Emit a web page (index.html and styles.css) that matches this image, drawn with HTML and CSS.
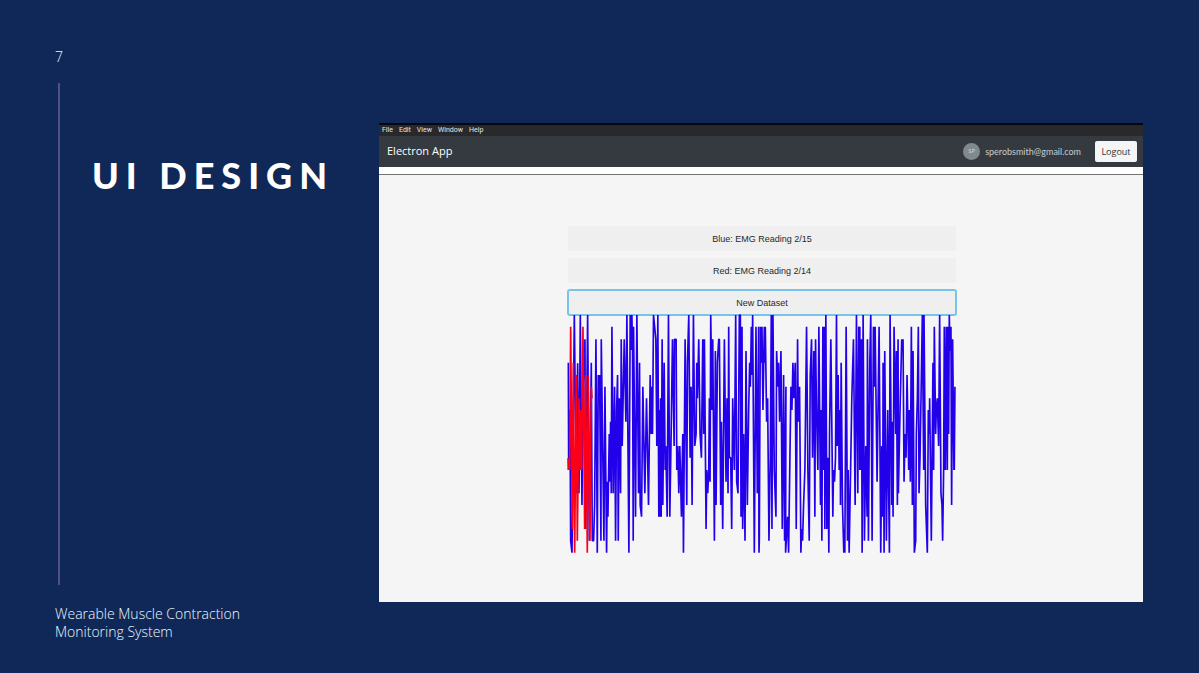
FILE: index.html
```html
<!DOCTYPE html>
<html lang="en">
<head>
<meta charset="utf-8">
<title>UI Design</title>
<link rel="stylesheet" href="styles.css">
</head>
<body>
<main class="slide">
  <aside class="rail">
    <span class="page-number">7</span>
    <div class="rail-body"><h1 class="title">UI DESIGN</h1></div>
    <p class="project">Wearable Muscle Contraction Monitoring System</p>
  </aside>
  <section class="app">
    <nav class="menu">
      <button type="button">File</button>
      <button type="button">Edit</button>
      <button type="button">View</button>
      <button type="button">Window</button>
      <button type="button">Help</button>
    </nav>
    <header class="navbar">
      <h2 class="brand">Electron App</h2>
      <span class="avatar">SP</span>
      <span class="email">sperobsmith@gmail.com</span>
      <button type="button" class="logout">Logout</button>
    </header>
    <div class="content">
      <div class="readings">
        <button type="button" class="dataset">Blue: EMG Reading 2/15</button>
        <button type="button" class="dataset">Red: EMG Reading 2/14</button>
        <button type="button" class="dataset selected">New Dataset</button>
        <svg class="chart" viewBox="25 15 1164 714" preserveAspectRatio="none" role="img" aria-label="EMG readings">
          <g class="blue">
            <polyline points="26,158 27,480 31,300 33,692 37,728 44,15 50,550 54,160 58,550 62,15 67,585 70,230 76,88 78,657 84,15 89,692 95,158 98,692 102,692 105,585 109,88 113,728 116,195 118,265 120,195 124,692 125,88 133,692 136,230 141,728 143,515 145,620 149,372 151,515 153,335 155,550 157,50 161,550 165,230 168,692 171,300 174,195 176,692 179,265 183,550 185,88 188,408 194,88 199,335 202,15 208,728 212,15 215,120 217,15 219,120 221,692 222,50 228,620 232,15 237,550 240,158 242,585 246,620 250,230 256,550 261,265 267,585 272,195 275,372 277,230 279,372 282,15 289,88 292,408 295,15 298,620 301,300"/>
            <polyline transform="translate(300 0)" points="1,300 1,620 3,265 5,620 8,88 10,585 14,158 17,480 19,408 23,620 27,15 31,620 35,372 39,88 44,408 45,88 50,88 52,480 55,408 58,550 61,408 66,620 68,480 70,372 72,728 77,88 82,585 84,158 88,15 92,443 95,230 98,585 102,15 106,408 110,372 112,158 114,265 118,88 122,372 126,443 130,88 133,372 135,88 140,657 142,480 145,550 148,480 150,265 152,515 154,15 158,300 160,88 165,692 168,123 170,585 174,158 178,88 180,88 184,585 186,335 190,657 195,88 200,515 203,265 206,550 208,50 210,443 214,443 217,657 220,265 225,480 229,15 232,515 236,550 240,15 243,15 245,620 248,50 250,657 253,372 257,692 260,123 264,585 268,300 271,158 273,230 276,50 278,195 280,15 285,728 290,50 294,550 298,50 299,728 300,692"/>
            <polyline transform="translate(600 0)" points="0,692 3,50 5,158 8,50 11,300 15,50 17,158 18,50 22,335 25,265 29,692 33,443 36,15 38,657 41,15 45,480 50,620 52,123 56,230 58,158 61,335 65,123 69,657 73,195 76,692 80,230 79,728 85,620 88,728 92,443 95,230 98,300 101,158 104,265 108,158 111,657 115,88 117,335 121,230 125,728 127,657 130,692 133,585 137,480 142,50 146,480 150,692 153,195 157,88 160,443 164,123 167,620 169,88 172,300 176,480 179,50 184,585 186,300 188,692 191,50 194,480 196,50 197,657 200,15 203,657 206,443 209,728 211,372 215,88 221,620 223,480 226,515 229,443 232,15 234,408 237,195 240,480 243,300 244,585 246,158 250,585 254,728 256,657 257,728 261,50 265,692 267,480 270,728 275,443 278,265 283,88 288,585 292,15 296,550 299,50"/>
            <polyline transform="translate(900 0)" points="-1,50 2,480 2,50 4,480 7,88 9,728 12,15 16,692 20,408 24,620 25,88 28,692 32,158 35,15 39,692 43,50 46,230 48,50 54,515 60,50 65,728 68,408 71,620 72,158 75,728 77,123 82,692 86,300 91,728 93,15 98,585 100,335 102,620 105,50 110,372 112,123 115,585 117,88 118,550 123,300 128,88 130,123 132,88 135,515 138,372 141,443 144,195 149,480 151,300 154,515 157,50 160,585 162,123 166,728 170,692 172,372 175,265 178,50 180,550 183,443 186,265 190,15 194,480 195,15 200,585 205,728 208,300 211,372 212,265 217,692 220,372 222,158 224,480 226,50 230,372 232,300 235,265 239,408 242,15 246,550 249,585 251,692 254,480 256,50 259,480 262,50 265,480 267,50 269,372 271,15 273,123 276,50 278,585 281,88 285,480 288,230 286,480"/>
          </g>
          <g class="red">
            <polyline points="25,445 26,480 28,445 30,480 33,50 38,657 41,158 45,728 50,195 53,692 58,265 61,480 63,300 66,480 70,50 75,657 78,195 83,728 86,195 91,692 95,230 97,265"/>
          </g>
        </svg>
      </div>
    </div>
  </section>
</main>
</body>
</html>
```
FILE: styles.css
```css
* { box-sizing: border-box; }
body {
  margin: 0;
  background: #102857;
  color: #fff;
  font-family: "Open Sans", "Noto Sans", sans-serif;
}
button { font: inherit; border: 0; padding: 0; }
.slide {
  min-height: 100vh;
  display: grid;
  grid-template-columns: 268px minmax(0, 1fr);
  column-gap: 56px;
  padding: 47px 56px 32px 55px;
}
.rail { display: flex; flex-direction: column; }
.page-number { font-size: 14px; line-height: 20px; font-weight: 300; color: #f0f6ff; }
.rail-body {
  flex: 1;
  margin: 16px 0 20px 3px;
  padding: 66px 0 0 32px;
  border-left: 2px solid #50508b;
}
.title {
  margin: 0;
  font: 900 36px/52px Lato, sans-serif;
  letter-spacing: 7px;
  white-space: nowrap;
}
.project {
  width: 200px;
  margin: 0;
  font-size: 14px;
  line-height: 18px;
  font-weight: 300;
  color: #ecf8ff;
}
.app {
  display: flex;
  flex-direction: column;
  margin: 76px 0 39px;
  border-top: 2px solid #05070c;
  background: #f5f5f5;
}
.menu {
  display: flex;
  gap: 6px;
  padding: 0 3px;
  background: #29292b;
  font-family: Roboto, sans-serif;
  font-size: 7px;
  line-height: 11px;
}
.menu button { background: none; color: #e6e6e6; }
.navbar {
  display: flex;
  align-items: center;
  height: 31px;
  padding: 0 6px 1px 8px;
  background: #343a40;
}
.brand { flex: 1; margin: 0; font-size: 11px; line-height: 16px; font-weight: 400; }
.avatar {
  width: 17px;
  height: 17px;
  margin-right: 5px;
  border-radius: 50%;
  background: #80898e;
  color: #d3dadd;
  font-size: 6px;
  line-height: 17px;
  text-align: center;
}
.email { font-family: Lato, sans-serif; font-size: 9px; color: #c8cccf; }
.logout {
  width: 42px;
  height: 21px;
  margin-left: 14px;
  border-radius: 2px;
  background: #f5f5f5;
  color: #303236;
  font-size: 9px;
}
.content {
  flex: 1;
  border-top: 7px solid #fff;
  box-shadow: inset 0 1px #737373;
  padding: 52px 24% 48px;
}
.readings { display: flex; flex-direction: column; padding: 0 4px 0 6px; }
.dataset {
  height: 25px;
  margin-bottom: 7px;
  border-radius: 2px;
  background: #efefef;
  color: #292929;
  font: 9px "Liberation Sans", sans-serif;
}
.selected {
  margin-bottom: 0;
  outline: 2px solid #79c3eb;
  outline-offset: -1px;
}
.chart { display: block; width: 100%; height: 238px; overflow: visible; }
.chart polyline { fill: none; stroke-width: 5; stroke-linejoin: bevel; }
.blue { stroke: #2300ea; }
.red { stroke: #fb0018; }
```
